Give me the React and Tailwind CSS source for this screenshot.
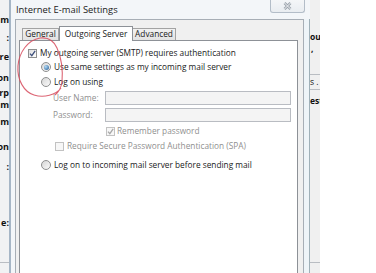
import React from "react";

const Check = ({ checked, disabled }) => (
  <span
    className={
      disabled
        ? "flex h-[9px] w-[9px] shrink-0 items-center justify-center border border-[#c2c2c2] bg-[#f7f7f7]"
        : "flex h-[9px] w-[9px] shrink-0 items-center justify-center border border-[#8e8f8f] bg-linear-to-br from-[#dedede] to-white"
    }
  >
    {checked && (
      <svg width="7" height="7" viewBox="0 0 7 7">
        <path
          d="M1 3.6 L2.8 5.6 L6.2 0.8"
          fill="none"
          stroke={disabled ? "#a8a8a8" : "#3d4f7c"}
          strokeWidth="1.3"
        />
      </svg>
    )}
  </span>
);

const Radio = ({ on }) => (
  <span className="flex h-[10px] w-[10px] shrink-0 items-center justify-center rounded-full border border-[#8e8f8f] bg-linear-to-br from-[#d6d6d6] to-[#fbfbfb]">
    {on && (
      <span className="h-[5px] w-[5px] rounded-full bg-[radial-gradient(circle_at_35%_35%,#b4dcf7,#1d5690)]" />
    )}
  </span>
);

const leftBits = [
  ["m", "mt-[15px]"],
  [":", "mt-[8px]"],
  ["re", "mt-[9px]"],
  ["on", "mt-[11px]"],
  ["rp", "mt-[5px]"],
  ["m", "mt-[2px]"],
  ["m", "mt-[7px]"],
  ["on", "mt-[15px]"],
  [":", "mt-[10px]"],
  ["e:", "mt-[46px]"],
];

export default function App() {
  return (
    <div className="relative flex h-[273px] w-[376px] overflow-hidden bg-white font-['Open_Sans',sans-serif] text-[8.3px] text-[#1a1a1a]">
      {/* window behind, left edge */}
      <div className="flex w-[9px] shrink-0 flex-col overflow-hidden bg-[#f1f2f3] text-[9px] font-bold text-[#111]">
        {leftBits.map(([t, m], i) => (
          <div key={i} className={`flex h-[10px] justify-end whitespace-nowrap leading-[10px] ${m}`}>
            {t}
          </div>
        ))}
        <div className="mt-auto mb-[10px] h-px bg-[#b9bdc2]" />
      </div>
      <div className="w-[2px] shrink-0 bg-[#a6b6c6]" />

      {/* dialog */}
      <div className="flex w-[299px] shrink-0 flex-col bg-[#f3f6f9]">
        <div className="flex h-[19px] shrink-0 items-start">
          <span className="pl-[5px] pt-[3px] text-[9.4px] leading-[13px] text-[#1a1a1a]">
            Internet E-mail Settings
          </span>
          <div className="ml-auto mr-[5px] flex h-[13px] w-[35px] items-center justify-center rounded-b-[3px] border border-t-0 border-[#b3bdc8] bg-linear-to-b from-[#f4f6f8] to-[#e9edf1]">
            <svg width="9" height="8" viewBox="0 0 9 8">
              <path d="M1.5 1 L7.5 7 M7.5 1 L1.5 7" stroke="#9aa2ab" strokeWidth="2.6" />
              <path d="M1.5 1 L7.5 7 M7.5 1 L1.5 7" stroke="#f4f6f8" strokeWidth="1" />
            </svg>
          </div>
        </div>
        <div className="flex flex-1">
          <div className="w-[4px] shrink-0" />
          <div className="flex w-[289px] shrink-0 flex-col border-x border-t border-[#a7aeb6] bg-[#f0f0f0]">
            {/* tabs */}
            <div className="mt-[6px] flex h-[14px] items-end pl-[6px]">
              <div className="flex h-[12px] w-[37px] items-center justify-center border border-b-0 border-[#a3a3a3] bg-linear-to-b from-[#f2f2f2] to-[#e2e2e2] leading-none">
                General
              </div>
              <div className="relative z-10 -mb-px flex h-[15px] w-[74px] items-center justify-center border border-b-0 border-[#8d9197] bg-white leading-none">
                Outgoing Server
              </div>
              <div className="flex h-[12px] w-[43px] items-center justify-center border border-b-0 border-l-0 border-[#a3a3a3] bg-linear-to-b from-[#f2f2f2] to-[#e2e2e2] leading-none">
                Advanced
              </div>
            </div>

            {/* tab panel */}
            <div className="ml-[3px] mr-[5px] flex flex-1 flex-col border border-b-0 border-[#8d9197] bg-white">
              <div className="ml-[8px] mt-[6px] flex h-[12px] items-center gap-[3px]">
                <Check checked />
                <span>My outgoing server (SMTP) requires authentication</span>
              </div>
              <div className="ml-[21px] mt-[2px] flex h-[12px] items-center gap-[3px]">
                <Radio on />
                <span>Use same settings as my incoming mail server</span>
              </div>
              <div className="ml-[21px] mt-[3px] flex h-[12px] items-center gap-[3px]">
                <Radio />
                <span>Log on using</span>
              </div>
              <div className="ml-[33px] mt-[3px] flex h-[14px] items-center text-[#8f8f8f]">
                <span className="w-[52px]">User Name:</span>
                <div className="h-[14px] w-[186px] border border-[#b9bcc2] bg-[#f4f4f4]" />
              </div>
              <div className="ml-[33px] mt-[3px] flex h-[14px] items-center text-[#8f8f8f]">
                <span className="w-[52px]">Password:</span>
                <div className="h-[14px] w-[186px] border border-[#b9bcc2] bg-[#f4f4f4]" />
              </div>
              <div className="ml-[86px] mt-[3px] flex h-[12px] items-center gap-[2px] text-[#8f8f8f]">
                <Check checked disabled />
                <span>Remember password</span>
              </div>
              <div className="ml-[35px] mt-[3px] flex h-[12px] items-center gap-[3px] text-[#8f8f8f]">
                <Check disabled />
                <span>Require Secure Password Authentication (SPA)</span>
              </div>
              <div className="ml-[21px] mt-[7px] flex h-[12px] items-center gap-[3px]">
                <Radio />
                <span>Log on to incoming mail server before sending mail</span>
              </div>
            </div>
          </div>
          <div className="w-[6px] shrink-0 border-r border-[#9fb0b8] bg-[#eef4f8]" />
        </div>
      </div>

      {/* window behind, right edge */}
      <div className="flex w-[10px] shrink-0 flex-col overflow-hidden bg-[#f0f0f0] text-[8.5px] font-bold text-[#111]">
        <div className="mt-[32px] h-[10px] whitespace-nowrap leading-[10px]">ou</div>
        <div className="mt-[3px] h-[7px] pl-[1px] leading-[7px]">,</div>
        <div className="mt-[22px] flex h-[16px] items-center whitespace-nowrap border-y border-[#b9bdc2] font-normal">s .</div>
        <div className="mt-[6px] h-[10px] whitespace-nowrap leading-[10px]">est</div>
        <div className="mt-auto mb-[10px] h-px bg-[#b9bdc2]" />
      </div>
      <div className="flex-1 bg-white" />

      {/* red annotation circle */}
      <svg className="pointer-events-none absolute left-0 top-0" width="376" height="273">
        <path
          d="M61 88 C56 95, 44 98, 34 95 C24 92, 17 80, 18 66 C19 52, 28 40, 40 38 C48 37, 54 41, 57 48 C61 57, 63 70, 62 82 C61 88, 59 92, 55 95"
          fill="none"
          stroke="#d64a5c"
          strokeWidth="1.1"
          opacity="0.85"
        />
      </svg>
    </div>
  );
}
